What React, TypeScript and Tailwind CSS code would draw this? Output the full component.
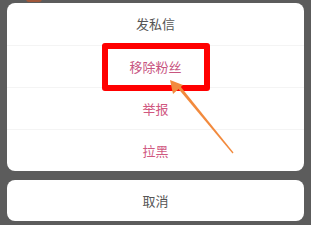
export default function App() {
  const items = [
    { label: "发私信", tone: "text-[#555555]" },
    { label: "移除粉丝", tone: "text-[#c8557f]" },
    { label: "举报", tone: "text-[#d0587f]" },
    { label: "拉黑", tone: "text-[#d0587f]" },
  ];

  return (
    <div
      className="relative h-[225px] w-[311px] overflow-hidden bg-[#5c5c5c] px-[7px] pt-[3px]"
      style={{ fontFamily: '"Noto Sans CJK SC", "Noto Sans", sans-serif' }}
    >
      <div className="absolute left-[26px] top-[-4px] h-[6px] w-[16px] rounded-full bg-[#a0573a]" />

      <div className="overflow-hidden rounded-[8px] bg-white">
        {items.map((item, i) => (
          <div
            key={item.label}
            className={`flex h-[42px] items-center justify-center text-[13px] ${item.tone} ${
              i > 0 ? "border-t border-[#f4f4f4]" : ""
            }`}
          >
            {item.label}
          </div>
        ))}
      </div>

      <div className="mt-[9px] flex h-[41px] items-center justify-center rounded-[8px] bg-white text-[13px] text-[#555555]">
        取消
      </div>

      <div className="absolute left-[102px] top-[43px] h-[48px] w-[108px] rounded-[3px] border-[6px] border-[#ff0000]" />

      <svg
        className="absolute left-0 top-0"
        width="311"
        height="225"
        viewBox="0 0 311 225"
      >
        <polygon points="176,86 178.5,84 233.5,152.5 232.5,153.5" fill="#f28a3d" />
        <polygon points="170,80 183,85 173,94" fill="#f28a3d" />
      </svg>
    </div>
  );
}
